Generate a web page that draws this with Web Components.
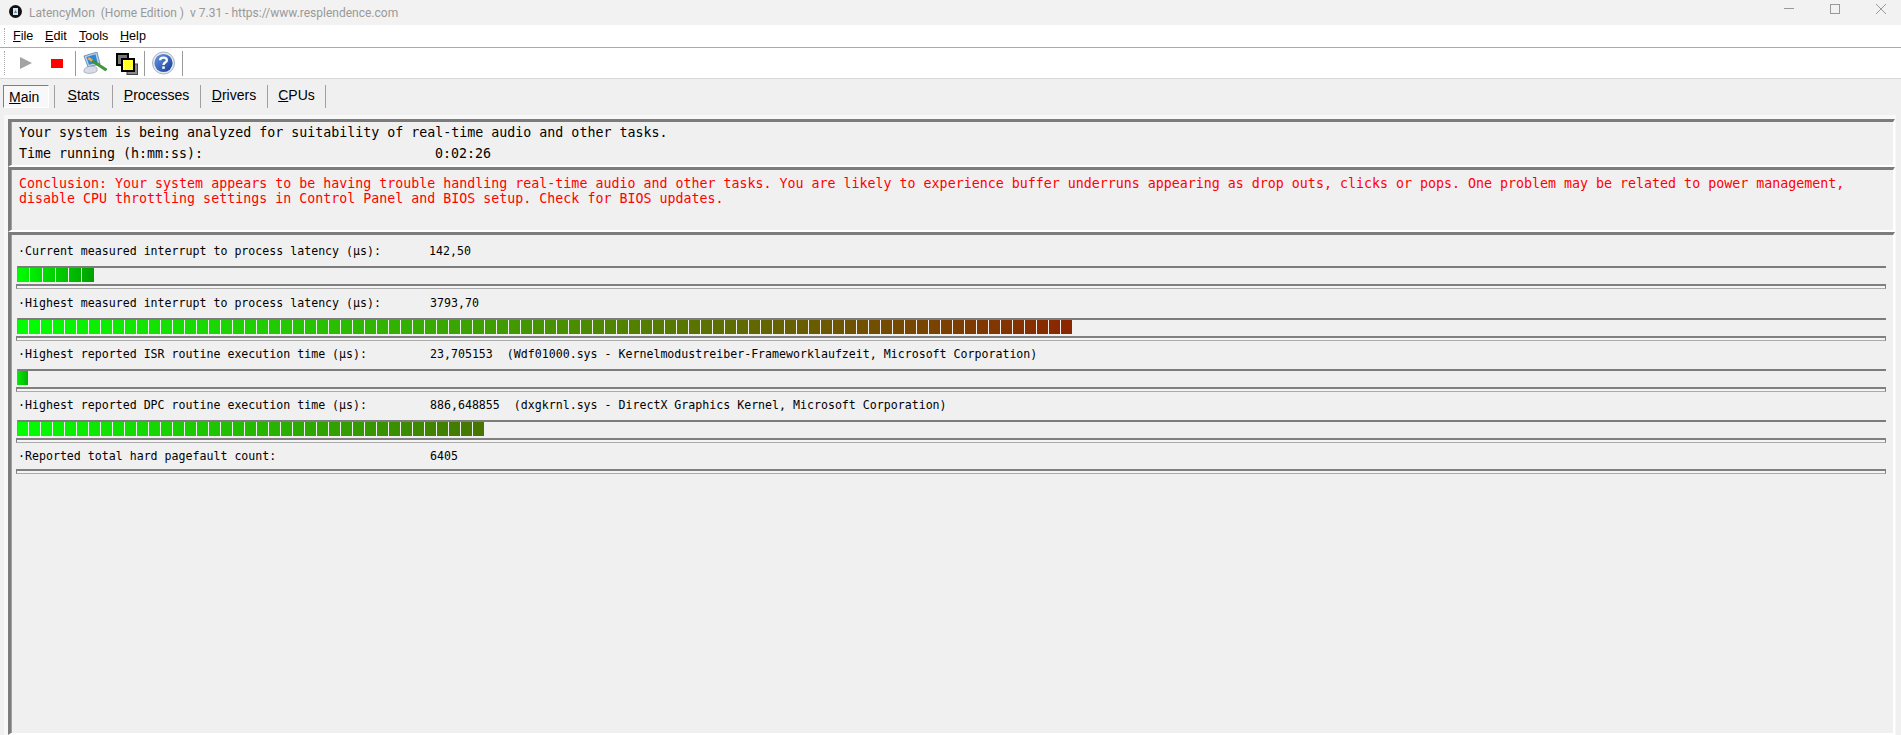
<!DOCTYPE html>
<html>
<head>
<meta charset="utf-8">
<title>LatencyMon</title>
<style>
  html, body { margin: 0; height: 100%; overflow: hidden; background: #f0f0f0; }
  body { display: flex; flex-direction: column; font-family: "Liberation Sans", sans-serif; }
</style>
</head>
<body>
<lm-titlebar>LatencyMon&nbsp; (Home Edition )&nbsp; v 7.31 - https://www.resplendence.com</lm-titlebar>
<lm-menubar></lm-menubar>
<lm-toolbar></lm-toolbar>
<lm-tabs></lm-tabs>
<lm-content>
  <lm-panel style="height:48px">
    <lm-line height="21">Your system is being analyzed for suitability of real-time audio and other tasks.</lm-line>
    <lm-line height="21" label-width="416"><span slot="label">Time running (h:mm:ss):</span>0:02:26</lm-line>
  </lm-panel>
  <lm-panel style="height:65px;padding-top:6px">
    <lm-line height="15" color="#f00">Conclusion: Your system appears to be having trouble handling real-time audio and other tasks. You are likely to experience buffer underruns appearing as drop outs, clicks or pops. One problem may be related to power management,</lm-line>
    <lm-line height="15" color="#f00">disable CPU throttling settings in Control Panel and BIOS setup. Check for BIOS updates.</lm-line>
  </lm-panel>
  <lm-panel style="flex:1;padding-top:6px">
    <lm-meter style="height:52px" label="Current measured interrupt to process latency (µs):" value="142,50" label-width="411" count="6" pitch="13" end="0,160,0"></lm-meter>
    <lm-meter label="Highest measured interrupt to process latency (µs):" value="3793,70" count="88" pitch="12" end="140,38,0"></lm-meter>
    <lm-meter label="Highest reported ISR routine execution time (µs):" value="23,705153" note="(Wdf01000.sys - Kernelmodustreiber-Frameworklaufzeit, Microsoft Corporation)" count="1" pitch="12" start="0,232,0"></lm-meter>
    <lm-meter label="Highest reported DPC routine execution time (µs):" value="886,648855" note="(dxgkrnl.sys - DirectX Graphics Kernel, Microsoft Corporation)" count="39" pitch="12" end="72,116,0"></lm-meter>
    <lm-meter label="Reported total hard pagefault count:" value="6405" nobar></lm-meter>
  </lm-panel>
</lm-content>

<script>
class LmTitlebar extends HTMLElement {
  constructor() {
    super();
    this.attachShadow({ mode: 'open' }).innerHTML = `
      <style>
        :host { display: flex; align-items: center; height: 25px; background: #f2f2f2; color: #999; font: 12px Roboto, sans-serif; flex: none; }
        .logo { margin: 0 7px 3px 9px; flex: none; }
        .text { flex: 1; white-space: nowrap; }
        .btns { display: flex; gap: 36px; margin: 0 15px 7px 0; }
      </style>
      <svg class="logo" width="13" height="13" viewBox="0 0 13 13">
        <circle cx="6.5" cy="6.5" r="6.5" fill="#111"/>
        <path d="M4 3 H9 V10 H4 Z" fill="#dbe6ee"/>
        <path d="M5 8 L6.5 5 L8 8 Z" fill="#4a86c0"/>
      </svg>
      <span class="text"><slot></slot></span>
      <div class="btns">
        <svg width="10" height="10" viewBox="0 0 10 10"><path d="M0 4.5 H10" stroke="#999" fill="none"/></svg>
        <svg width="10" height="10" viewBox="0 0 10 10"><rect x=".5" y=".5" width="9" height="9" stroke="#999" fill="none"/></svg>
        <svg width="10" height="10" viewBox="0 0 10 10"><path d="M0 0 L10 10 M10 0 L0 10" stroke="#999" fill="none"/></svg>
      </div>`;
  }
}
customElements.define('lm-titlebar', LmTitlebar);

class LmMenubar extends HTMLElement {
  constructor() {
    super();
    const items = [['File', 32], ['Edit', 34], ['Tools', 41], ['Help', 30]];
    this.attachShadow({ mode: 'open' }).innerHTML = `
      <style>
        :host { display: flex; align-items: center; height: 22px; background: #fff; border-bottom: 1px solid #a9a9b0; flex: none; font: 12.6px "Liberation Sans", sans-serif; color: #000; padding-left: 4px; }
        .grip { width: 2px; height: 16px; border-left: 1px dotted #aaa; margin-right: 6px; }
      </style>
      <div class="grip"></div>
      ${items.map(([t, w]) => `<span style="width:${w}px"><u>${t[0]}</u>${t.slice(1)}</span>`).join('')}`;
  }
}
customElements.define('lm-menubar', LmMenubar);

class LmToolbar extends HTMLElement {
  constructor() {
    super();
    this.attachShadow({ mode: 'open' }).innerHTML = `
      <style>
        :host { display: flex; align-items: center; height: 30px; background: #fff; border-bottom: 1px solid #d8d8d8; flex: none; padding-left: 4px; }
        .grip { width: 2px; height: 24px; border-left: 1px dotted #aaa; flex: none; }
        .sep { width: 1px; height: 25px; background: #9a9a9a; flex: none; }
        svg { flex: none; display: block; }
      </style>
      <div class="grip"></div>
      <svg style="margin-left:13px" width="12" height="12" viewBox="0 0 12 12"><path d="M0 0 L12 6 L0 12 Z" fill="#a3a3a3"/></svg>
      <svg style="margin-left:19px" width="12" height="9" viewBox="0 0 12 9"><rect width="12" height="9" fill="#f00"/></svg>
      <div class="sep" style="margin-left:12px"></div>
      <svg style="margin-left:7px" width="24" height="22" viewBox="0 0 24 22">
        <path d="M1 4 L14 0 L17 12 L5 15 Z" fill="#b8cfe6" stroke="#5d7fa8" stroke-width=".8"/>
        <path d="M3.5 5 L12.5 2.3 L14.6 10.6 L6 12.8 Z" fill="#2f86d8"/>
        <path d="M1 18 C2 14 11 13 14 16 L14 19 C11 22 3 22 1 20 Z" fill="#d8dce6" stroke="#8a94a8" stroke-width=".6"/>
        <path d="M6 5 L11 8.5 L9 10 L4.5 7 Z" fill="#e9b34a"/>
        <path d="M10 8 L24 17 L22.5 19 L9 10 Z" fill="#3da02f" stroke="#1d6a16" stroke-width=".5"/>
      </svg>
      <svg style="margin-left:9px;margin-top:1px" width="22" height="22" viewBox="0 0 22 22">
        <defs><pattern id="dith" width="2" height="2" patternUnits="userSpaceOnUse"><rect width="2" height="2" fill="#ffff20"/><rect width="1" height="1" fill="#fff"/><rect x="1" y="1" width="1" height="1" fill="#fff"/></pattern></defs>
        <rect x="1" y="1" width="11" height="11" fill="#777" stroke="#000" stroke-width="2"/>
        <rect x="11" y="11" width="10.5" height="10.5" fill="#8a8a8a" stroke="#444" stroke-width="1"/>
        <rect x="6" y="6" width="12" height="12" fill="url(#dith)" stroke="#000" stroke-width="2"/>
      </svg>
      <div class="sep" style="margin-left:6px"></div>
      <svg style="margin-left:7px" width="23" height="24" viewBox="0 0 24 24">
        <defs><linearGradient id="h" x1="0" y1="0" x2="1" y2="1"><stop offset="0" stop-color="#6b9be0"/><stop offset="1" stop-color="#123a9a"/></linearGradient></defs>
        <circle cx="12" cy="12" r="11.5" fill="#e4e8f0" stroke="#a8b0c0"/>
        <circle cx="12" cy="12" r="9.5" fill="url(#h)"/>
        <path d="M8.5 9 C8.5 5.5 15.5 5.5 15.5 9 C15.5 11.5 12 11.5 12 14" stroke="#fff" stroke-width="2.4" fill="none"/>
        <rect x="10.7" y="15.5" width="2.6" height="2.6" fill="#fff"/>
      </svg>
      <div class="sep" style="margin-left:7px"></div>`;
  }
}
customElements.define('lm-toolbar', LmToolbar);

class LmTabs extends HTMLElement {
  constructor() {
    super();
    // width of each tab up to and including its right-hand separator
    const tabs = [['Stats', 58], ['Processes', 88], ['Drivers', 67], ['CPUs', 58]];
    this.attachShadow({ mode: 'open' }).innerHTML = `
      <style>
        :host { display: flex; height: 36px; padding: 6px 0 0 3px; box-sizing: border-box; flex: none; background: #f0f0f0; font: 14px "Liberation Sans", sans-serif; color: #000; align-items: flex-start; }
        .tab { height: 23px; box-sizing: border-box; border-right: 1px solid #a0a0a0; text-align: center; line-height: 21px; flex: none; }
        .main { width: 46px; height: 23px; box-sizing: border-box; border: 1px solid; border-color: #808080 #fff #fff #808080; background: #f8f8f8; line-height: 22px; padding-left: 5px; margin-right: 5px; flex: none; }
        .first { width: 1px; height: 23px; background: #a0a0a0; flex: none; }
      </style>
      <div class="main"><u>M</u>ain</div>
      <div class="first"></div>
      ${tabs.map(([t, w]) => `<div class="tab" style="width:${w}px"><u>${t[0]}</u>${t.slice(1)}</div>`).join('')}`;
  }
}
customElements.define('lm-tabs', LmTabs);

class LmContent extends HTMLElement {
  constructor() {
    super();
    this.attachShadow({ mode: 'open' }).innerHTML = `
      <style>
        :host { display: flex; flex-direction: column; flex: 1; margin: 0 5px 0 4px; padding: 4px 1px 0 4px; background: #f8f8f8; min-height: 0; }
      </style>
      <slot></slot>`;
  }
}
customElements.define('lm-content', LmContent);

class LmPanel extends HTMLElement {
  constructor() {
    super();
    this.attachShadow({ mode: 'open' }).innerHTML = `
      <style>
        :host { display: block; box-sizing: border-box; background: #f0f0f0; border: solid #7c7c7c; border-width: 3px 2px 2px 3px; border-right-color: #fff; border-bottom-color: #fff; box-shadow: inset 1px 0 0 #a0a0a0; flex: none; overflow: hidden; min-height: 0; }
      </style>
      <slot></slot>`;
  }
}
customElements.define('lm-panel', LmPanel);

class LmLine extends HTMLElement {
  constructor() {
    super();
    const h = this.getAttribute('height') || 21;
    const col = this.getAttribute('color') || '#000';
    const lw = this.getAttribute('label-width');
    this.attachShadow({ mode: 'open' }).innerHTML = `
      <style>
        :host { display: flex; padding-left: 8px; height: ${h}px; font: 13.3px/${h}px "DejaVu Sans Mono", monospace; color: ${col}; white-space: nowrap; }
        .label { flex: none; ${lw ? `width: ${lw}px;` : 'display: none;'} }
      </style>
      <span class="label"><slot name="label"></slot></span><span><slot></slot></span>`;
  }
}
customElements.define('lm-line', LmLine);

class LmMeter extends HTMLElement {
  constructor() {
    super();
    const a = n => this.getAttribute(n);
    const count = +a('count') || 0, pitch = +a('pitch') || 12;
    const s = (a('start') || '0,255,0').split(',').map(Number);
    const e = (a('end') || '0,176,0').split(',').map(Number);
    const hasBar = a('nobar') === null;
    const mix = t => s.map((v, k) => Math.round(v + (e[k] - v) * t)).join(',');
    let segs = '';
    for (let i = 0; i < count; i++) {
      // the first block is a pixel narrower than the rest
      const w = pitch - 1 - (i === 0 ? 1 : 0);
      segs += `<i style="width:${w}px;background:linear-gradient(to right,rgb(${mix(i / count)}),rgb(${mix((i + 1) / count)}))"></i>`;
    }
    this.attachShadow({ mode: 'open' }).innerHTML = `
      <style>
        :host { display: block; height: 51px; font: 11.6px/14px "DejaVu Sans Mono", monospace; color: #000; white-space: nowrap; }
        .line { display: flex; height: ${hasBar ? 25 : 23}px; padding: 3px 0 0 7px; box-sizing: border-box; }
        .label { width: ${a('label-width') || 412}px; flex: none; }
        .value { flex: none; }
        .note { margin-left: 14px; }
        .groove { margin-left: 6px; width: 1868px; height: 14px; border-top: 2px solid #7c7c7c; border-left: 1px solid #909090; }
        .fill { display: flex; gap: 1px; height: 14px; }
        i { display: block; flex: none; height: 14px; }
        .track { margin: ${hasBar ? 2 : 0}px 0 0 5px; width: 1868px; height: 2px; border: 1px solid #808080; border-top-width: 2px; background: #f4f4f4; border-bottom-color: #aaa; }
      </style>
      <div class="line"><span class="label">·${a('label')}</span><span class="value">${a('value')}</span>${a('note') ? `<span class="note">${a('note')}</span>` : ''}</div>
      ${hasBar ? `<div class="groove"><div class="fill">${segs}</div></div>` : ''}
      <div class="track"></div>`;
  }
}
customElements.define('lm-meter', LmMeter);
</script>
</body>
</html>
